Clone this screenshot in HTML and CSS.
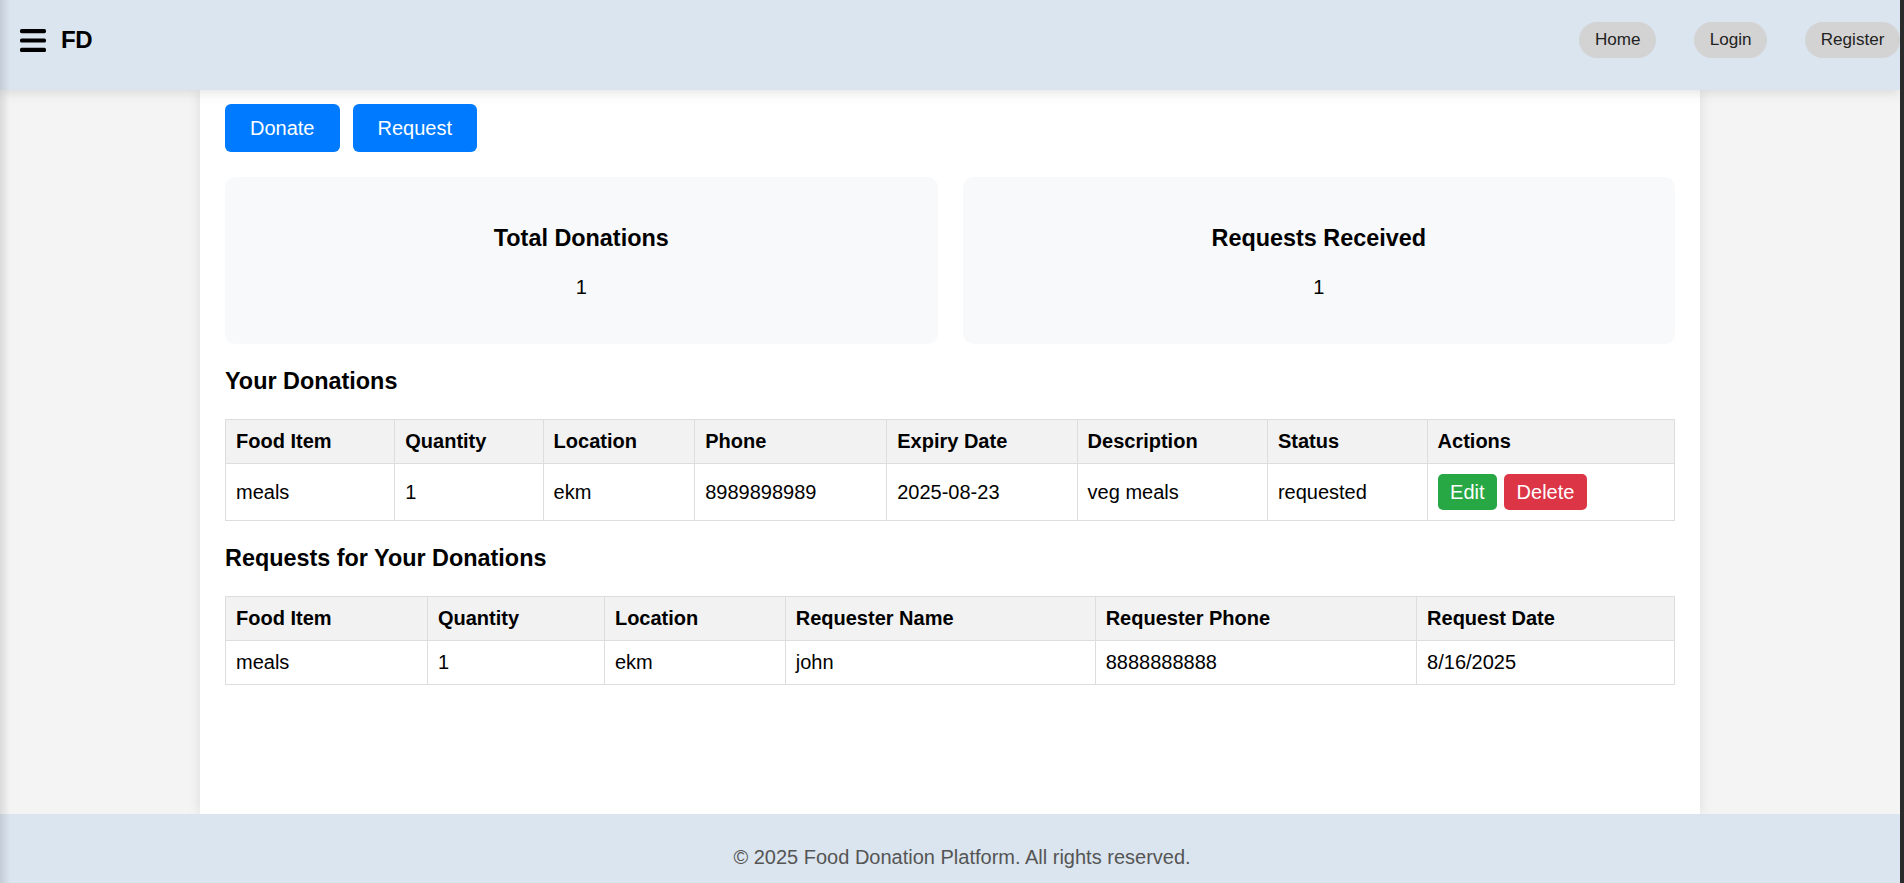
FILE: index.html
```html
<!DOCTYPE html>
<html lang="en">
<head>
<meta charset="utf-8">
<title>Food Donation Platform</title>
<link rel="stylesheet" href="styles.css">
</head>
<body>
<header class="site-header">
  <div class="brand">
    <svg class="menu-icon" width="26" height="23" viewBox="0 0 26 23" aria-hidden="true">
      <rect x="0" y="0" width="26" height="4.2" rx="1.6"/>
      <rect x="0" y="9.4" width="26" height="4.2" rx="1.6"/>
      <rect x="0" y="18.8" width="26" height="4.2" rx="1.6"/>
    </svg>
    <span class="logo">FD</span>
  </div>
  <nav class="nav">
    <a class="nav-pill" href="#">Home</a>
    <a class="nav-pill" href="#">Login</a>
    <a class="nav-pill" href="#">Register</a>
  </nav>
</header>

<main class="container">
  <div class="actions">
    <button class="btn">Donate</button>
    <button class="btn">Request</button>
  </div>

  <div class="stats">
    <div class="stat-card">
      <h3>Total Donations</h3>
      <p>1</p>
    </div>
    <div class="stat-card">
      <h3>Requests Received</h3>
      <p>1</p>
    </div>
  </div>

  <h3 class="section-title">Your Donations</h3>
  <table class="data">
    <thead>
      <tr>
        <th>Food Item</th>
        <th>Quantity</th>
        <th>Location</th>
        <th>Phone</th>
        <th>Expiry Date</th>
        <th>Description</th>
        <th>Status</th>
        <th>Actions</th>
      </tr>
    </thead>
    <tbody>
      <tr>
        <td>meals</td>
        <td>1</td>
        <td>ekm</td>
        <td>8989898989</td>
        <td>2025-08-23</td>
        <td>veg meals</td>
        <td>requested</td>
        <td><button class="btn-sm btn-edit">Edit</button><button class="btn-sm btn-delete">Delete</button></td>
      </tr>
    </tbody>
  </table>

  <h3 class="section-title">Requests for Your Donations</h3>
  <table class="data">
    <thead>
      <tr>
        <th>Food Item</th>
        <th>Quantity</th>
        <th>Location</th>
        <th>Requester Name</th>
        <th>Requester Phone</th>
        <th>Request Date</th>
      </tr>
    </thead>
    <tbody>
      <tr>
        <td>meals</td>
        <td>1</td>
        <td>ekm</td>
        <td>john</td>
        <td>8888888888</td>
        <td>8/16/2025</td>
      </tr>
    </tbody>
  </table>
</main>

<footer class="site-footer">
  <p>&copy; 2025 Food Donation Platform. All rights reserved.</p>
</footer>
</body>
</html>
```

FILE: styles.css
```css
* {
  box-sizing: border-box;
}

html,
body {
  margin: 0;
  padding: 0;
}

body {
  font-family: "Liberation Sans", Arial, sans-serif;
  font-size: 20px;
  color: #000;
  background: #f4f4f4;
  min-height: 100vh;
  display: flex;
  flex-direction: column;
  padding-right: 4px;
  overflow: hidden;
}

/* window edge shading on the left */
body::before {
  content: "";
  position: fixed;
  left: 0;
  top: 0;
  bottom: 0;
  width: 10px;
  background: linear-gradient(to right, rgba(0, 0, 0, 0.1), rgba(0, 0, 0, 0));
  pointer-events: none;
  z-index: 10;
}

/* dark strip on the right edge */
body::after {
  content: "";
  position: fixed;
  right: 0;
  top: 0;
  bottom: 0;
  width: 4px;
  background: #2b2b2b;
  pointer-events: none;
  z-index: 10;
}

.site-header {
  flex-shrink: 0;
  height: 90px;
  background: #dbe5ef;
  display: flex;
  justify-content: space-between;
  align-items: center;
  padding: 0 0 10px 20px;
  box-shadow: 0 2px 12px rgba(0, 0, 0, 0.12);
  position: relative;
  z-index: 2;
}

.brand {
  display: flex;
  align-items: center;
  gap: 15px;
}

.menu-icon {
  display: block;
  fill: #000;
}

.logo {
  font-weight: bold;
  font-size: 24px;
  letter-spacing: -0.3px;
}

.nav {
  display: flex;
  gap: 38px;
}

.nav-pill {
  display: block;
  background: #d3d3d3;
  color: #222;
  font-size: 17.1px;
  line-height: 20px;
  padding: 8px 15.6px;
  border-radius: 25px;
  text-decoration: none;
}

.container {
  flex: 1 0 auto;
  align-self: center;
  width: 1500px;
  background: #fff;
  padding: 14px 25px 25px;
  box-shadow: 0 0 12px rgba(0, 0, 0, 0.1);
}

.actions {
  display: flex;
  gap: 13px;
  margin-bottom: 25px;
}

.btn {
  border: none;
  border-radius: 6px;
  font-family: inherit;
  font-size: 20px;
  line-height: 23px;
  padding: 12.5px 25px;
  color: #fff;
  background: #007bff;
}

.stats {
  display: grid;
  grid-template-columns: 1fr 1fr;
  gap: 25px;
}

.stat-card {
  background: #f8f9fa;
  border-radius: 10px;
  padding: 25px;
  text-align: center;
}

.stat-card h3 {
  font-size: 23.4px;
  margin: 23.4px 0;
}

.stat-card p {
  margin: 20px 0;
}

.section-title {
  font-size: 23.4px;
  line-height: 25.6px;
  margin: 25px 0 23.4px;
}

.data {
  width: 100%;
  border-collapse: collapse;
  margin: 25px 0;
}

.data th,
.data td {
  border: 1px solid #ddd;
  padding: 10px;
  text-align: left;
}

.data th {
  background: #f2f2f2;
  font-weight: bold;
}

.btn-sm {
  border: none;
  border-radius: 5px;
  font-family: inherit;
  font-size: 20px;
  line-height: 23px;
  padding: 6.25px 12.5px;
  color: #fff;
}

.btn-edit {
  background: #28a745;
  margin-right: 7px;
}

.btn-delete {
  background: #dc3545;
}

.site-footer {
  flex-shrink: 0;
  height: 69px;
  background: #dbe5ef;
  padding: 32px 0 0 24px;
  text-align: center;
  color: #555;
}

.site-footer p {
  margin: 0;
  line-height: 23px;
}
```
